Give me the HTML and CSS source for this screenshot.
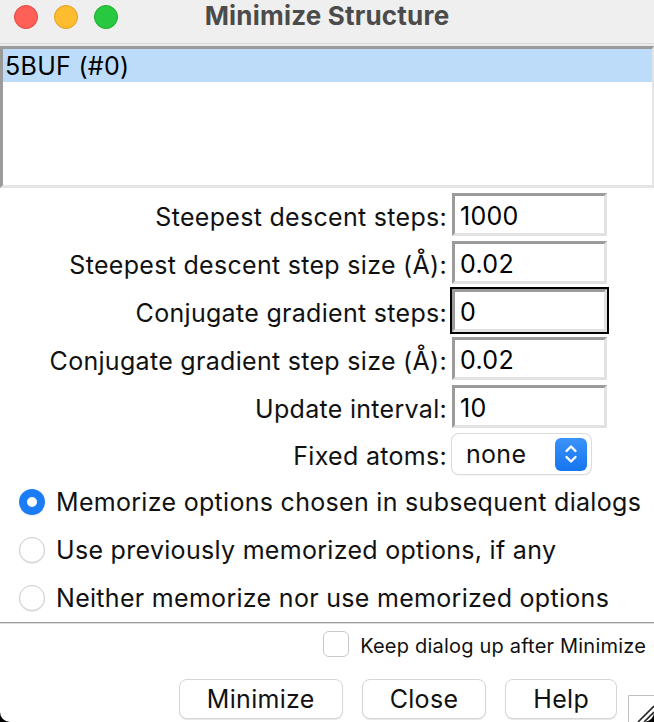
FILE: index.html
```html
<!DOCTYPE html>
<html lang="en">
<head>
    <meta charset="UTF-8">
    <meta name="viewport" content="width=device-width, initial-scale=1.0">
    <title>Minimize Structure</title>
    <link rel="stylesheet" href="styles.css">
</head>
<body>
    <div class="window">
        <!-- Title bar -->
        <div class="titlebar">
            <div class="lights">
                <span class="light red"></span>
                <span class="light yellow"></span>
                <span class="light green"></span>
            </div>
            <div class="title">Minimize Structure</div>
            <div></div>
        </div>

        <!-- Model list -->
        <div class="list-wrap">
            <div class="listbox">
                <div class="list-item selected">5BUF (#0)</div>
            </div>
        </div>

        <!-- Parameters -->
        <div class="params">
            <label class="param-label">Steepest descent steps:</label>
            <div class="field">1000</div>

            <label class="param-label">Steepest descent step size (Å):</label>
            <div class="field">0.02</div>

            <label class="param-label">Conjugate gradient steps:</label>
            <div class="field focused">0</div>

            <label class="param-label">Conjugate gradient step size (Å):</label>
            <div class="field">0.02</div>

            <label class="param-label">Update interval:</label>
            <div class="field">10</div>

            <label class="param-label">Fixed atoms:</label>
            <div class="popup">
                <span class="popup-value">none</span>
                <span class="stepper">
                    <svg width="16" height="24" viewBox="0 0 16 24">
                        <path d="M3.5 9 L8 4.5 L12.5 9" fill="none" stroke="#fff" stroke-width="2.4" stroke-linecap="round" stroke-linejoin="round"/>
                        <path d="M3.5 15 L8 19.5 L12.5 15" fill="none" stroke="#fff" stroke-width="2.4" stroke-linecap="round" stroke-linejoin="round"/>
                    </svg>
                </span>
            </div>
        </div>

        <!-- Memorize options -->
        <div class="radios">
            <div class="radio-row"><span class="radio checked"></span>Memorize options chosen in subsequent dialogs</div>
            <div class="radio-row"><span class="radio"></span>Use previously memorized options, if any</div>
            <div class="radio-row"><span class="radio"></span>Neither memorize nor use memorized options</div>
        </div>

        <!-- Footer -->
        <div class="footer">
            <div class="keep-row">
                <span class="checkbox"></span>
                <span>Keep dialog up after Minimize</span>
            </div>
            <div class="buttons">
                <button class="btn">Minimize</button>
                <button class="btn">Close</button>
                <button class="btn">Help</button>
            </div>
        </div>

        <div class="grip">
            <svg width="26" height="27" viewBox="0 0 26 27">
                <path d="M0.5 27 V0.5 H26" fill="none" stroke="#bdbdbd" stroke-width="1"/>
                <path d="M10 27 L26 11" stroke="#222" stroke-width="1.6"/>
                <path d="M16 27 L26 17" stroke="#222" stroke-width="1.6"/>
            </svg>
        </div>
    </div>
</body>
</html>
```

FILE: styles.css
```css
/* Basic Reset */
* {
    box-sizing: border-box;
    margin: 0;
    padding: 0;
}

body {
    background-color: #000;
    font-family: Inter, "Liberation Sans", Arial, sans-serif;
    font-size: 25px;
    letter-spacing: 0.3px;
    color: #111;
}

.window {
    position: relative;
    width: 654px;
    height: 722px;
    background: #fff;
    border-radius: 0 0 10px 10px;
    overflow: hidden;
}

/* Title bar */
.titlebar {
    display: grid;
    grid-template-columns: 1fr auto 1fr;
    align-items: center;
    height: 44px;
    background: #efefef;
    border-bottom: 1px solid #d9d9d9;
}

.lights {
    display: flex;
    gap: 16px;
    padding-left: 14px;
    padding-bottom: 10px;
}

.light {
    width: 24px;
    height: 24px;
    border-radius: 50%;
}

.red { background: #fe5f57; border: 1px solid #e2463f; }
.yellow { background: #febc2e; border: 1px solid #dfa023; }
.green { background: #28c840; border: 1px solid #1dad2b; }

.title {
    font-weight: bold;
    color: #4b4b4b;
    font-size: 26px;
    letter-spacing: 0.2px;
    padding-bottom: 13px;
}

/* Model list */
.list-wrap {
    background: #ececec;
    padding-top: 2px;
}

.listbox {
    height: 142px;
    background: #fff;
    border-top: 3px solid #9b9b9b;
    border-left: 3px solid #9b9b9b;
    border-right: 2px solid #e4e4e4;
    border-bottom: 3px solid #e4e4e4;
}

.list-item {
    height: 33px;
    line-height: 35px;
    padding-left: 2px;
    color: #000;
}

.list-item.selected {
    background: #bddcfa;
}

/* Parameters */
.params {
    display: grid;
    grid-template-columns: 447px 155px;
    column-gap: 5px;
    row-gap: 5px;
    margin-top: 5px;
    align-items: center;
}

.param-label {
    text-align: right;
    padding-top: 4px;
}

.field {
    height: 43px;
    line-height: 40px;
    padding-left: 5px;
    background: #fff;
    border-top: 3px solid #9b9b9b;
    border-left: 3px solid #9b9b9b;
    border-right: 3px solid #e2e2e2;
    border-bottom: 3px solid #e2e2e2;
    color: #000;
}

.field.focused {
    outline: 2px solid #000;
    outline-offset: 0;
}

.popup {
    display: flex;
    align-items: center;
    justify-content: space-between;
    width: 139px;
    height: 40px;
    margin-top: 1px;
    padding: 0 4px 0 14px;
    background: #fff;
    border-radius: 7px;
    box-shadow: 0 0 0 1px #dcdcdc, 0 1px 2px rgba(0, 0, 0, 0.15);
}

.stepper {
    display: flex;
    align-items: center;
    justify-content: center;
    width: 32px;
    height: 33px;
    border-radius: 6px;
    background: linear-gradient(#3b93f8, #1675ef);
}

/* Radio buttons */
.radios {
    margin-top: 4px;
}

.radio-row {
    display: flex;
    align-items: center;
    gap: 11px;
    height: 48px;
    padding-left: 19px;
}

.radio {
    flex-shrink: 0;
    width: 26px;
    height: 26px;
    border-radius: 50%;
    background: #fff;
    border: 1px solid #cbcbcb;
    box-shadow: 0 1px 1px rgba(0, 0, 0, 0.08);
}

.radio.checked {
    border: 8px solid #1a7cf6;
    background: #fff;
}

/* Footer */
.footer {
    border-top: 1px solid #9d9d9d;
    box-shadow: inset 0 1px 0 #dedede;
}

.keep-row {
    display: flex;
    justify-content: flex-end;
    align-items: center;
    gap: 11px;
    padding: 7px 8px 0 0;
    font-size: 20px;
    letter-spacing: 0.2px;
}

.keep-row span:last-child {
    padding-top: 4px;
}

.checkbox {
    width: 26px;
    height: 26px;
    border: 1px solid #c8c8c8;
    border-radius: 6px;
    background: #fff;
}

.buttons {
    display: flex;
    justify-content: flex-end;
    gap: 19px;
    padding: 21px 37px 0 0;
}

.btn {
    height: 40px;
    padding: 0 27px;
    font-family: inherit;
    font-size: 25px;
    letter-spacing: 0.3px;
    color: #111;
    background: #fff;
    border: 1px solid #d6d6d6;
    border-radius: 8px;
    box-shadow: 0 1px 1px rgba(0, 0, 0, 0.1);
}

/* Resize grip sits over the corner */
.grip {
    position: absolute;
    right: 0;
    bottom: 0;
    width: 26px;
    height: 27px;
}
```
